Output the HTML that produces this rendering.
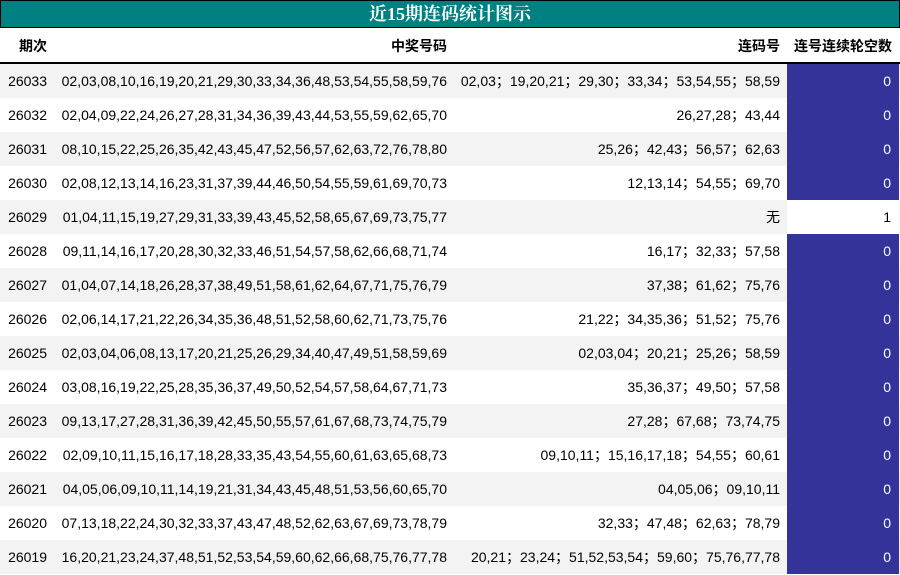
<!DOCTYPE html>
<html><head><meta charset="utf-8"><style>
*{margin:0;padding:0;box-sizing:border-box}
body{width:900px;height:575px;background:#fff;font-family:"Liberation Sans","Noto Sans CJK SC",sans-serif;font-size:14px;color:#000;position:relative;overflow:hidden}
.t{position:absolute;left:0;top:0;width:900px;height:28px;background:#008080;border:1px solid #000;color:#fff;font:bold 18px "Liberation Serif","Noto Serif CJK SC",serif;text-align:center;line-height:26px}
.h{position:absolute;top:28px;height:36px;width:900px;border-bottom:2px solid #000;font-weight:bold}
.r{position:absolute;left:0;width:900px;height:34px}
.r.g{background:#f3f3f3}
.c{position:absolute;top:0;height:100%;text-align:right;white-space:nowrap;line-height:34px}
.c1{left:0;width:47px}.c2{left:55px;width:392px}.c3{left:447px;width:333px}
.c4{left:787px;width:112px;padding-right:8px;background:#333399;color:#fff}
.c4.w{background:#fff;color:#000}
.h .c{line-height:36px}
.h .c4{background:none;color:#000;padding-right:8px;width:113px;left:787px}
</style></head><body>
<div class="t">近15期连码统计图示</div>
<div class="h"><div class="c c1">期次</div><div class="c c2">中奖号码</div><div class="c c3">连码号</div><div class="c c4">连号连续轮空数</div></div>
<div class="r g" style="top:64px"><div class="c c1">26033</div><div class="c c2">02,03,08,10,16,19,20,21,29,30,33,34,36,48,53,54,55,58,59,76</div><div class="c c3">02,03；19,20,21；29,30；33,34；53,54,55；58,59</div><div class="c c4">0</div></div>
<div class="r" style="top:98px"><div class="c c1">26032</div><div class="c c2">02,04,09,22,24,26,27,28,31,34,36,39,43,44,53,55,59,62,65,70</div><div class="c c3">26,27,28；43,44</div><div class="c c4">0</div></div>
<div class="r g" style="top:132px"><div class="c c1">26031</div><div class="c c2">08,10,15,22,25,26,35,42,43,45,47,52,56,57,62,63,72,76,78,80</div><div class="c c3">25,26；42,43；56,57；62,63</div><div class="c c4">0</div></div>
<div class="r" style="top:166px"><div class="c c1">26030</div><div class="c c2">02,08,12,13,14,16,23,31,37,39,44,46,50,54,55,59,61,69,70,73</div><div class="c c3">12,13,14；54,55；69,70</div><div class="c c4">0</div></div>
<div class="r g" style="top:200px"><div class="c c1">26029</div><div class="c c2">01,04,11,15,19,27,29,31,33,39,43,45,52,58,65,67,69,73,75,77</div><div class="c c3">无</div><div class="c c4 w">1</div></div>
<div class="r" style="top:234px"><div class="c c1">26028</div><div class="c c2">09,11,14,16,17,20,28,30,32,33,46,51,54,57,58,62,66,68,71,74</div><div class="c c3">16,17；32,33；57,58</div><div class="c c4">0</div></div>
<div class="r g" style="top:268px"><div class="c c1">26027</div><div class="c c2">01,04,07,14,18,26,28,37,38,49,51,58,61,62,64,67,71,75,76,79</div><div class="c c3">37,38；61,62；75,76</div><div class="c c4">0</div></div>
<div class="r" style="top:302px"><div class="c c1">26026</div><div class="c c2">02,06,14,17,21,22,26,34,35,36,48,51,52,58,60,62,71,73,75,76</div><div class="c c3">21,22；34,35,36；51,52；75,76</div><div class="c c4">0</div></div>
<div class="r g" style="top:336px"><div class="c c1">26025</div><div class="c c2">02,03,04,06,08,13,17,20,21,25,26,29,34,40,47,49,51,58,59,69</div><div class="c c3">02,03,04；20,21；25,26；58,59</div><div class="c c4">0</div></div>
<div class="r" style="top:370px"><div class="c c1">26024</div><div class="c c2">03,08,16,19,22,25,28,35,36,37,49,50,52,54,57,58,64,67,71,73</div><div class="c c3">35,36,37；49,50；57,58</div><div class="c c4">0</div></div>
<div class="r g" style="top:404px"><div class="c c1">26023</div><div class="c c2">09,13,17,27,28,31,36,39,42,45,50,55,57,61,67,68,73,74,75,79</div><div class="c c3">27,28；67,68；73,74,75</div><div class="c c4">0</div></div>
<div class="r" style="top:438px"><div class="c c1">26022</div><div class="c c2">02,09,10,11,15,16,17,18,28,33,35,43,54,55,60,61,63,65,68,73</div><div class="c c3">09,10,11；15,16,17,18；54,55；60,61</div><div class="c c4">0</div></div>
<div class="r g" style="top:472px"><div class="c c1">26021</div><div class="c c2">04,05,06,09,10,11,14,19,21,31,34,43,45,48,51,53,56,60,65,70</div><div class="c c3">04,05,06；09,10,11</div><div class="c c4">0</div></div>
<div class="r" style="top:506px"><div class="c c1">26020</div><div class="c c2">07,13,18,22,24,30,32,33,37,43,47,48,52,62,63,67,69,73,78,79</div><div class="c c3">32,33；47,48；62,63；78,79</div><div class="c c4">0</div></div>
<div class="r g" style="top:540px"><div class="c c1">26019</div><div class="c c2">16,20,21,23,24,37,48,51,52,53,54,59,60,62,66,68,75,76,77,78</div><div class="c c3">20,21；23,24；51,52,53,54；59,60；75,76,77,78</div><div class="c c4">0</div></div>
</body></html>
